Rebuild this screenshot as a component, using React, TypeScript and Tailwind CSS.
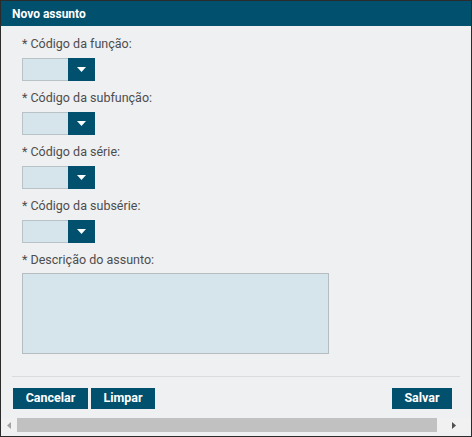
import React from "react";

const font = { fontFamily: "Roboto, 'Liberation Sans', sans-serif" };

function Select() {
  return (
    <div className="flex h-[23px] w-[73px]">
      <div className="h-full w-[46px] border border-[#b9c2c7] border-r-0 bg-[#d6e4eb]" />
      <div className="flex h-full w-[27px] items-center justify-center bg-[#00506e]">
        <svg width="9" height="5" viewBox="0 0 9 5">
          <polygon points="0,0 9,0 4.5,5" fill="#ffffff" />
        </svg>
      </div>
    </div>
  );
}

function Field({ label }: { label: string }) {
  return (
    <div className="flex flex-col">
      <div className="h-[14px] text-[12.5px] leading-[14px] text-[#4d4d4d]">{label}</div>
      <div className="mt-[7px]">
        <Select />
      </div>
    </div>
  );
}

export default function App() {
  return (
    <div
      className="flex h-[437px] w-[472px] flex-col border border-[#2b2b2b] bg-[#eef0f2]"
      style={font}
    >
      <div className="flex h-[25px] items-center bg-[#00506e] pl-[11px] text-[12px] font-bold text-white">
        Novo assunto
      </div>
      <div className="flex flex-col gap-[10px] pl-[21px] pt-[11px]">
        <Field label="* Código da função:" />
        <Field label="* Código da subfunção:" />
        <Field label="* Código da série:" />
        <Field label="* Código da subsérie:" />
        <div className="flex flex-col">
          <div className="h-[14px] text-[12.5px] leading-[14px] text-[#4d4d4d]">* Descrição do assunto:</div>
          <div className="mt-[6px] h-[81px] w-[307px] border border-[#b5bdc1] bg-[#d6e4eb]" />
        </div>
      </div>
      <div className="mx-[11px] mt-[22px] h-px bg-[#d9dcdf]" />
      <div className="mt-[11px] flex h-[21px] items-stretch pl-[12px] pr-[19px]">
        <button className="w-[75px] bg-[#00506e] text-[12.5px] font-bold text-white">Cancelar</button>
        <button className="ml-[3px] w-[64px] bg-[#00506e] text-[12.5px] font-bold text-white">Limpar</button>
        <div className="flex-1" />
        <button className="w-[60px] bg-[#00506e] text-[12.5px] font-bold text-white">Salvar</button>
      </div>
      <div className="mt-[9px] flex h-[14px] items-center bg-[#f1f1f1]">
        <div className="flex w-[16px] items-center justify-center">
          <svg width="4" height="7" viewBox="0 0 4 7">
            <polygon points="4,0 4,7 0,3.5" fill="#a3a3a3" />
          </svg>
        </div>
        <div className="h-full w-[420px] bg-[#c1c1c1]" />
        <div className="flex flex-1 items-center justify-center">
          <svg width="4" height="7" viewBox="0 0 4 7">
            <polygon points="0,0 0,7 4,3.5" fill="#505050" />
          </svg>
        </div>
      </div>
    </div>
  );
}
